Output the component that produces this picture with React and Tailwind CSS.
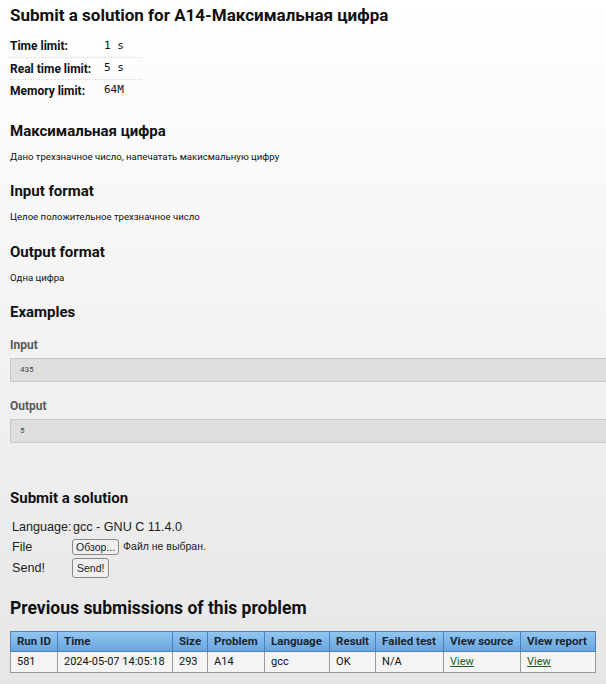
export default function App() {
  const cols = [
    { label: "Run ID", w: "w-[47px]", v: "581" },
    { label: "Time", w: "w-[115px]", v: "2024-05-07 14:05:18" },
    { label: "Size", w: "w-[35px]", v: "293" },
    { label: "Problem", w: "w-[57px]", v: "A14" },
    { label: "Language", w: "w-[65px]", v: "gcc" },
    { label: "Result", w: "w-[46px]", v: "OK" },
    { label: "Failed test", w: "w-[68px]", v: "N/A" },
    { label: "View source", w: "w-[77px]", v: "View", link: true },
    { label: "View report", w: "w-[75px]", v: "View", link: true },
  ];

  return (
    <div className="min-h-screen bg-gradient-to-b from-white to-[#e6e6e6] font-['Roboto',sans-serif] text-[#111] overflow-hidden">
      <div className="pl-[10px] pt-[3px]">
        <h1 className="text-[17px] font-bold leading-[24px]">
          Submit a solution for A14-Максимальная цифра
        </h1>

        {/* limits */}
        <div className="mt-[8px] w-[132px] text-[12px]">
          <LimitRow label="Time limit:" value="1 s" />
          <LimitRow label="Real time limit:" value="5 s" border />
          <LimitRow label="Memory limit:" value="64M" border />
        </div>

        <Section title="Максимальная цифра" className="mt-[20px]">
          Дано трехзначное число, напечатать макисмальную цифру
        </Section>
        <Section title="Input format" className="mt-[18px]">
          Целое положительное трехзначное число
        </Section>
        <Section title="Output format" className="mt-[19px]">
          Одна цифра
        </Section>

        <h2 className="mt-[18px] text-[15px] font-bold leading-[20px]">Examples</h2>

        <h3 className="mt-[14px] text-[12px] font-bold leading-[18px] text-[#5a5a5a]">Input</h3>
        <Pre value="435" />
        <h3 className="mt-[15px] text-[12px] font-bold leading-[18px] text-[#5a5a5a]">Output</h3>
        <Pre value="5" />

        <h2 className="mt-[45px] text-[15px] font-bold leading-[20px]">Submit a solution</h2>

        <div className="mt-[9px] pl-[2px] font-['Liberation_Sans',sans-serif] text-[12.6px] text-[#222]">
          <div className="flex h-[20px] items-center">
            <span className="w-[61px]">Language:</span>
            <span>gcc - GNU C 11.4.0</span>
          </div>
          <div className="flex h-[20px] items-center">
            <span className="w-[60px]">File</span>
            <button className="h-[16px] rounded-[3px] border border-[#8a8a8a] bg-[#efefef] px-[3px] text-[10.5px] leading-[14px]">
              Обзор...
            </button>
            <span className="ml-[4px] text-[10.5px]">Файл не выбран.</span>
          </div>
          <div className="flex h-[22px] items-center">
            <span className="w-[60px]">Send!</span>
            <button className="h-[20px] rounded-[3px] border border-[#8a8a8a] bg-[#efefef] px-[4px] text-[10.5px] leading-[18px]">
              Send!
            </button>
          </div>
        </div>

        <h2 className="mt-[17px] text-[17.5px] font-bold leading-[24px]">
          Previous submissions of this problem
        </h2>

        <table className="mt-[11px] border-collapse text-[11px]">
          <thead>
            <tr className="bg-gradient-to-b from-[#93c6ef] to-[#65a4de]">
              {cols.map((c) => (
                <th
                  key={c.label}
                  className={`${c.w} h-[20px] border border-[#4a80c2] px-[6px] text-left text-[11.5px] font-bold text-[#1b2632] whitespace-nowrap`}
                >
                  {c.label}
                </th>
              ))}
            </tr>
          </thead>
          <tbody>
            <tr className="bg-[#f4f4f4]">
              {cols.map((c) => (
                <td
                  key={c.label}
                  className="h-[21px] border border-[#9a9a9a] px-[6px] whitespace-nowrap"
                >
                  {c.link ? (
                    <a href="#" className="text-[#1d5e1d] underline">
                      {c.v}
                    </a>
                  ) : (
                    c.v
                  )}
                </td>
              ))}
            </tr>
          </tbody>
        </table>
      </div>
    </div>
  );
}

function LimitRow({ label, value, border }) {
  return (
    <div
      className={`flex h-[22px] items-center ${
        border ? "border-t border-dotted border-[#d8d8d8]" : ""
      }`}
    >
      <span className="w-[94px] font-bold">{label}</span>
      <span className="font-['DejaVu_Sans_Mono',monospace] text-[11px]">{value}</span>
    </div>
  );
}

function Section({ title, children, className }) {
  return (
    <div className={className}>
      <h2 className="text-[15px] font-bold leading-[20px]">{title}</h2>
      <p className="mt-[10px] text-[9.6px] leading-[12px]">{children}</p>
    </div>
  );
}

function Pre({ value }) {
  return (
    <div className="mt-[4px] -mr-[10px] flex h-[24px] items-center border border-[#c8c8c8] bg-[#dedede] pl-[9px] text-[8px] text-[#444]">
      {value}
    </div>
  );
}
